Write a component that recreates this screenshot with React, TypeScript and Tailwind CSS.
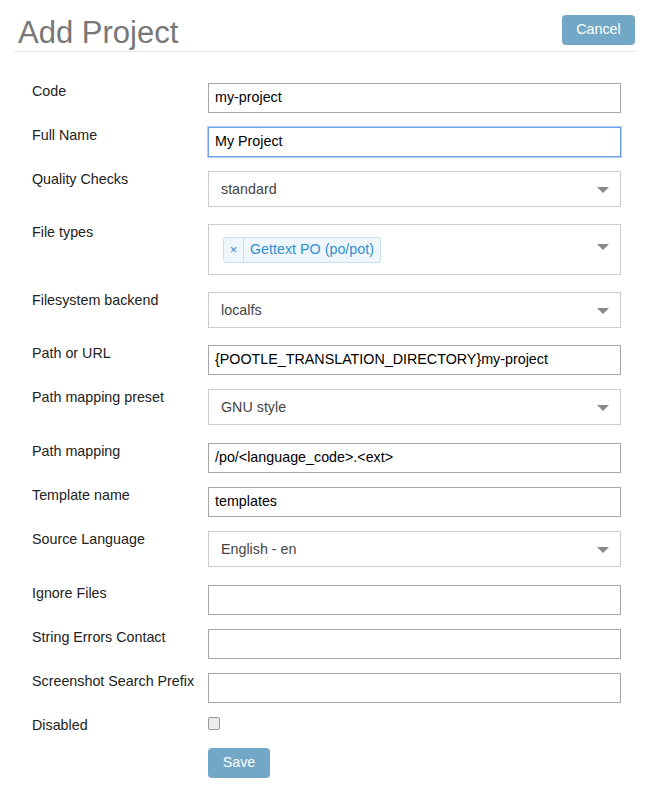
import React from "react";

type Row = {
  label: string;
  kind: "text" | "focus" | "select" | "tags";
  value?: string;
  gap: string;
};

const rows: Row[] = [
  { label: "Code", kind: "text", value: "my-project", gap: "mb-[14px]" },
  { label: "Full Name", kind: "focus", value: "My Project", gap: "mb-[14px]" },
  { label: "Quality Checks", kind: "select", value: "standard", gap: "mb-[17px]" },
  { label: "File types", kind: "tags", gap: "mb-[17px]" },
  { label: "Filesystem backend", kind: "select", value: "localfs", gap: "mb-[17px]" },
  {
    label: "Path or URL",
    kind: "text",
    value: "{POOTLE_TRANSLATION_DIRECTORY}my-project",
    gap: "mb-[14px]",
  },
  { label: "Path mapping preset", kind: "select", value: "GNU style", gap: "mb-[18px]" },
  { label: "Path mapping", kind: "text", value: "/po/<language_code>.<ext>", gap: "mb-[14px]" },
  { label: "Template name", kind: "text", value: "templates", gap: "mb-[14px]" },
  { label: "Source Language", kind: "select", value: "English - en", gap: "mb-[18px]" },
  { label: "Ignore Files", kind: "text", value: "", gap: "mb-[14px]" },
  { label: "String Errors Contact", kind: "text", value: "", gap: "mb-[14px]" },
  { label: "Screenshot Search Prefix", kind: "text", value: "", gap: "mb-[14px]" },
];

function Arrow() {
  return (
    <span className="w-0 h-0 border-l-[6px] border-r-[6px] border-t-[6px] border-l-transparent border-r-transparent border-t-[#8a8a8a]" />
  );
}

function Field({ row }: { row: Row }) {
  if (row.kind === "select") {
    return (
      <div className="h-[36px] flex-1 border border-[#cccccc] flex items-center justify-between pl-[12px] pr-[11px] pt-[1px] text-[14.3px] text-[#444]">
        <span>{row.value}</span>
        <Arrow />
      </div>
    );
  }
  if (row.kind === "tags") {
    return (
      <div className="h-[51px] flex-1 border border-[#cccccc] flex items-start justify-between pl-[14px] pr-[11px] pt-[12px]">
        <div className="flex h-[26px] border border-[#c6e1f3] bg-[#eff7fd] rounded-[3px] text-[14.3px] text-[#2f8fd3]">
          <span className="w-[20px] flex items-center justify-center border-r border-[#c6e1f3] text-[13px] text-[#2f8fd3]">
            ×
          </span>
          <span className="flex items-center px-[6px]">Gettext PO (po/pot)</span>
        </div>
        <div className="pt-[7px] flex">
          <Arrow />
        </div>
      </div>
    );
  }
  const focus = row.kind === "focus";
  return (
    <div
      className={
        focus
          ? "h-[30px] flex-1 border border-[#6f9fe4] shadow-[0_0_0_1px_#b3cdf3] flex items-center pl-[6px] text-[14.3px] text-black"
          : "h-[30px] flex-1 border border-[#a6a6a6] flex items-center pl-[6px] text-[14.3px] text-black"
      }
    >
      {row.value}
    </div>
  );
}

export default function App() {
  return (
    <div className="bg-white w-[652px] min-h-[795px] pl-[14px] pr-[16px] font-['Liberation_Sans',Arial,sans-serif]">
      {/* header */}
      <div className="h-[52px] border-b border-[#e8e8e8] flex justify-between items-start">
        <h1 className="mt-[15px] pl-[4px] text-[31px] leading-[36px] text-[#777]">Add Project</h1>
        <button className="mt-[15px] mr-[1px] h-[30px] w-[73px] rounded-[4px] bg-[#73a7c6] text-white text-[14.3px]">
          Cancel
        </button>
      </div>

      {/* form */}
      <div className="pt-[31px] pl-[18px] pr-[15px]">
        {rows.map((row) => (
          <div key={row.label} className={`flex items-start ${row.gap}`}>
            <label className="w-[176px] shrink-0 text-[14.3px] leading-4 text-[#222]">{row.label}</label>
            <Field row={row} />
          </div>
        ))}

        <div className="flex items-start mb-[15px]">
          <label className="w-[176px] shrink-0 text-[14.3px] leading-4 text-[#222]">Disabled</label>
          <span className="mt-[0px] w-[12px] h-[13px] rounded-[2px] border border-[#9a9a9a] bg-[#ececec]" />
        </div>

        <div className="flex">
          <div className="w-[176px] shrink-0" />
          <button className="h-[30px] w-[62px] rounded-[4px] bg-[#73a7c6] text-white text-[14.3px]">Save</button>
        </div>
      </div>
    </div>
  );
}
